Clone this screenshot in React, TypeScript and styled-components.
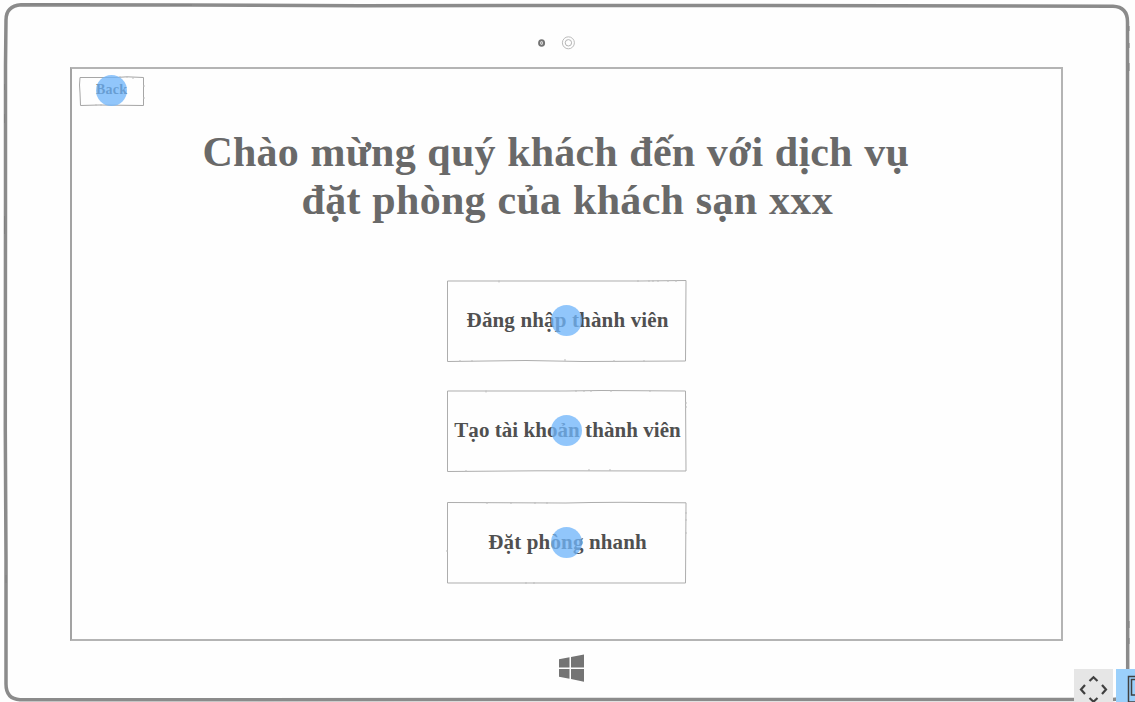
import React from "react";
import styled, { createGlobalStyle } from "styled-components";

const GlobalStyle = createGlobalStyle`
  *, *::before, *::after { box-sizing: border-box; }
  body {
    margin: 0;
    background: #fefefe;
    overflow: hidden;
    font-family: "Liberation Serif", "Times New Roman", serif;
  }
`;

const Device = styled.main`
  position: relative;
  width: 1135px;
  height: 702px;
  overflow: hidden;
  display: flex;
  flex-direction: column;
  background: #fefefe;
`;

const Outline = styled.svg`
  position: absolute;
  inset: 0;
  width: 100%;
  height: 100%;
  overflow: visible;
  fill: none;
  pointer-events: none;
`;

const Bezel = styled.div<{ $height: number; $inset: string }>`
  flex: none;
  height: ${(p) => p.$height}px;
  padding: ${(p) => p.$inset};
`;

const Camera = styled.svg`
  display: block;
  width: 42px;
  height: 16px;
`;

const WindowsLogo = styled.svg`
  display: block;
  width: 27px;
  height: 29px;
`;

const Screen = styled.section`
  flex: none;
  width: 993px;
  height: 574px;
  margin-left: 70px;
  border: 2px solid #b4b4b4;
  border-left-color: #a3a3a3;
  padding: 7px 0 0 7px;
`;

const SketchButton = styled.button<{ $w: number; $h: number; $size: number; $inset: string }>`
  position: relative;
  display: flex;
  align-items: center;
  justify-content: center;
  width: ${(p) => p.$w}px;
  height: ${(p) => p.$h}px;
  padding: ${(p) => p.$inset};
  border: 0;
  background: transparent;
  color: #505050;
  font: bold ${(p) => p.$size}px/1.15 "Liberation Serif", "Times New Roman", serif;
  white-space: nowrap;
  cursor: pointer;
`;

const Label = styled.span<{ $track: number }>`
  letter-spacing: ${(p) => p.$track}px;
  margin-right: ${(p) => -p.$track}px;
`;

const Hotspot = styled.span`
  position: absolute;
  left: 50%;
  top: 50%;
  width: 31px;
  height: 31px;
  margin: -16px 0 0 -15.5px;
  border-radius: 50%;
  background: rgba(112, 181, 250, 0.77);
`;

const Heading = styled.h1`
  margin: 22px 0 0;
  color: #696969;
  font-size: 42px;
  line-height: 48px;
  font-weight: bold;
  white-space: nowrap;
`;

const Line = styled.span<{ $indent: number; $track: number; $gap: number }>`
  display: block;
  padding-left: ${(p) => p.$indent}px;
  letter-spacing: ${(p) => p.$track}px;
  word-spacing: ${(p) => p.$gap}px;
`;

const Menu = styled.nav`
  display: flex;
  flex-direction: column;
  gap: 28px;
  margin: 56px 0 0 367px;

  > :last-child { margin-top: 2px; }
`;

const Controls = styled.div`
  position: absolute;
  left: 1074px;
  top: 669px;
  display: flex;
  gap: 3px;
`;

const Control = styled.div<{ $color: string }>`
  width: 39px;
  height: 39px;
  background: ${(p) => p.$color};
  svg { display: block; fill: none; stroke: #404040; }
`;

interface Choice {
  text: string;
  track: number;
  path: string;
  ticks: string;
}

const choices: Choice[] = [
  {
    text: "Đăng nhập thành viên",
    track: 0.15,
    path: "M1.5 1L194 1L240 .5M240 .5L239.5 81M239.5 81L137 81.5L80 80.5L1.5 81.5M1.5 81.5V1",
    ticks: "M53 .5v2M192 0v2M203 0v2M207 0v2M212 0v2M222 0v2M230 0v2M14 80v2M26 80v2M119 79v2M168 80v2M198 80v2",
  },
  {
    text: "Tạo tài khoản thành viên",
    track: 0.05,
    path: "M1.5 1L120 1L155 .5L239.5 1L240 81M240 81L92 80.8L1.5 81.5V1",
    ticks: "M40 .5v2M130 0v2M138 0v2M145 0v2M165 0v2M204 0v2M239 13h2M239 17h2M20 80v2M143 79v2M164 79v2",
  },
  {
    text: "Đặt phòng nhanh",
    track: 0.15,
    path: "M1.5 .5L120 1L145 .5L175 .3L240 .8L239.5 81M239.5 81L1.5 81V.5",
    ticks: "M41 0v2M65 0v2M89 0v2M101 0v2M239 11h2M239 18h2M239 31h2M0 49h2M80 80v2M88 80v2",
  },
];

export default function App() {
  return (
    <>
      <GlobalStyle />
      <Device>
        <Outline viewBox="0 0 1135 702">
          <path
            d="M21 4.8L190 5L360 5.7L700 5.5L1113 6.3Q1127.5 6.8 1127.5 22L1127.7 684Q1127 699.5 1112 699.5L20 699.7Q6 699 6 684V560L5.3 430L5.5 200L5.5 65L6 20Q6 6 21 4.8Z"
            stroke="#8b8b8b" strokeWidth="3.5"
          />
          <path
            d="M30 4h60m80 1h22M4.5 84v6m0 24v9m0 93v18M1129 26v5m0 12v5m0 15v8m0 550v7m0 10v6M6 575v8"
            stroke="#808080" strokeWidth="1"
          />
        </Outline>
        <Bezel $height={67} $inset="35px 0 0 535px">
          <Camera viewBox="0 0 42 16" fill="none">
            <ellipse cx="6.6" cy="8" rx="2.5" ry="2.8" stroke="#747474" strokeWidth="2" />
            <circle cx="6.6" cy="8" r="1" fill="#999" />
            <circle cx="33.4" cy="7.8" r="6" stroke="#bbb" />
            <circle cx="33.4" cy="7.8" r="3.2" stroke="#b4b4b4" />
          </Camera>
        </Bezel>
        <Screen>
          <SketchButton $w={65} $h={30} $size={14} $inset="0 0 2px">
            <Outline viewBox="0 0 65 30">
              <path d="M1 1.5L37 1.5L48 .8L64.5 1.5M64.5 1.5L64.5 29.5M64.5 29.5L20 29L1.5 29.5L1 17L.5 9L1 1.5" stroke="#a6a6a6" />
              <path d="M41 0v2M48 0v2M54 1v2M17 28v2M22 28v2M64 10h2M64 22h2" stroke="#c0c0c0" />
            </Outline>
            <Label $track={0.3}>Back</Label>
            <Hotspot />
          </SketchButton>
          <Heading>
            <Line $indent={123.5} $track={0.2} $gap={0.8}>Chào mừng quý khách đến với dịch vụ</Line>
            <Line $indent={222.5} $track={0.3} $gap={0.8}>đặt phòng của khách sạn xxx</Line>
          </Heading>
          <Menu>
            {choices.map((c) => (
              <SketchButton key={c.text} $w={241} $h={82} $size={21} $inset="0 0 2px 2px">
                <Outline viewBox="0 0 241 82">
                  <path d={c.path} stroke="#adadad" />
                  <path d={c.ticks} stroke="#bdbdbd" />
                </Outline>
                <Label $track={c.track}>{c.text}</Label>
                <Hotspot />
              </SketchButton>
            ))}
          </Menu>
        </Screen>
        <Bezel $height={61} $inset="13px 0 0 559px">
          <WindowsLogo viewBox="0 0 27 29" fill="#747474">
            <path d="M0 5.3L10.5 3.3V13.5H0ZM12 3L25 .6V13.5H12ZM0 15H10.5V24.7L0 22.8ZM12 15H25V27.7L12 25Z" />
          </WindowsLogo>
        </Bezel>
        <Controls>
          <Control $color="#e6e6e6">
            <svg width="39" height="39" strokeWidth="2.2">
              <path d="M15.5 12L19.5 8.2L23.5 12M11 16L7 20.5L11 25M28 16L32 20.5L28 25M15.5 29L19.5 32.7L23.5 29" />
            </svg>
          </Control>
          <Control $color="#9bd0fb">
            <svg width="39" height="39" strokeWidth="1.5">
              <path d="M12.5 7.5H34V33H12.5ZM15.5 10.5H31V26H15.5Z" />
            </svg>
          </Control>
        </Controls>
      </Device>
    </>
  );
}
